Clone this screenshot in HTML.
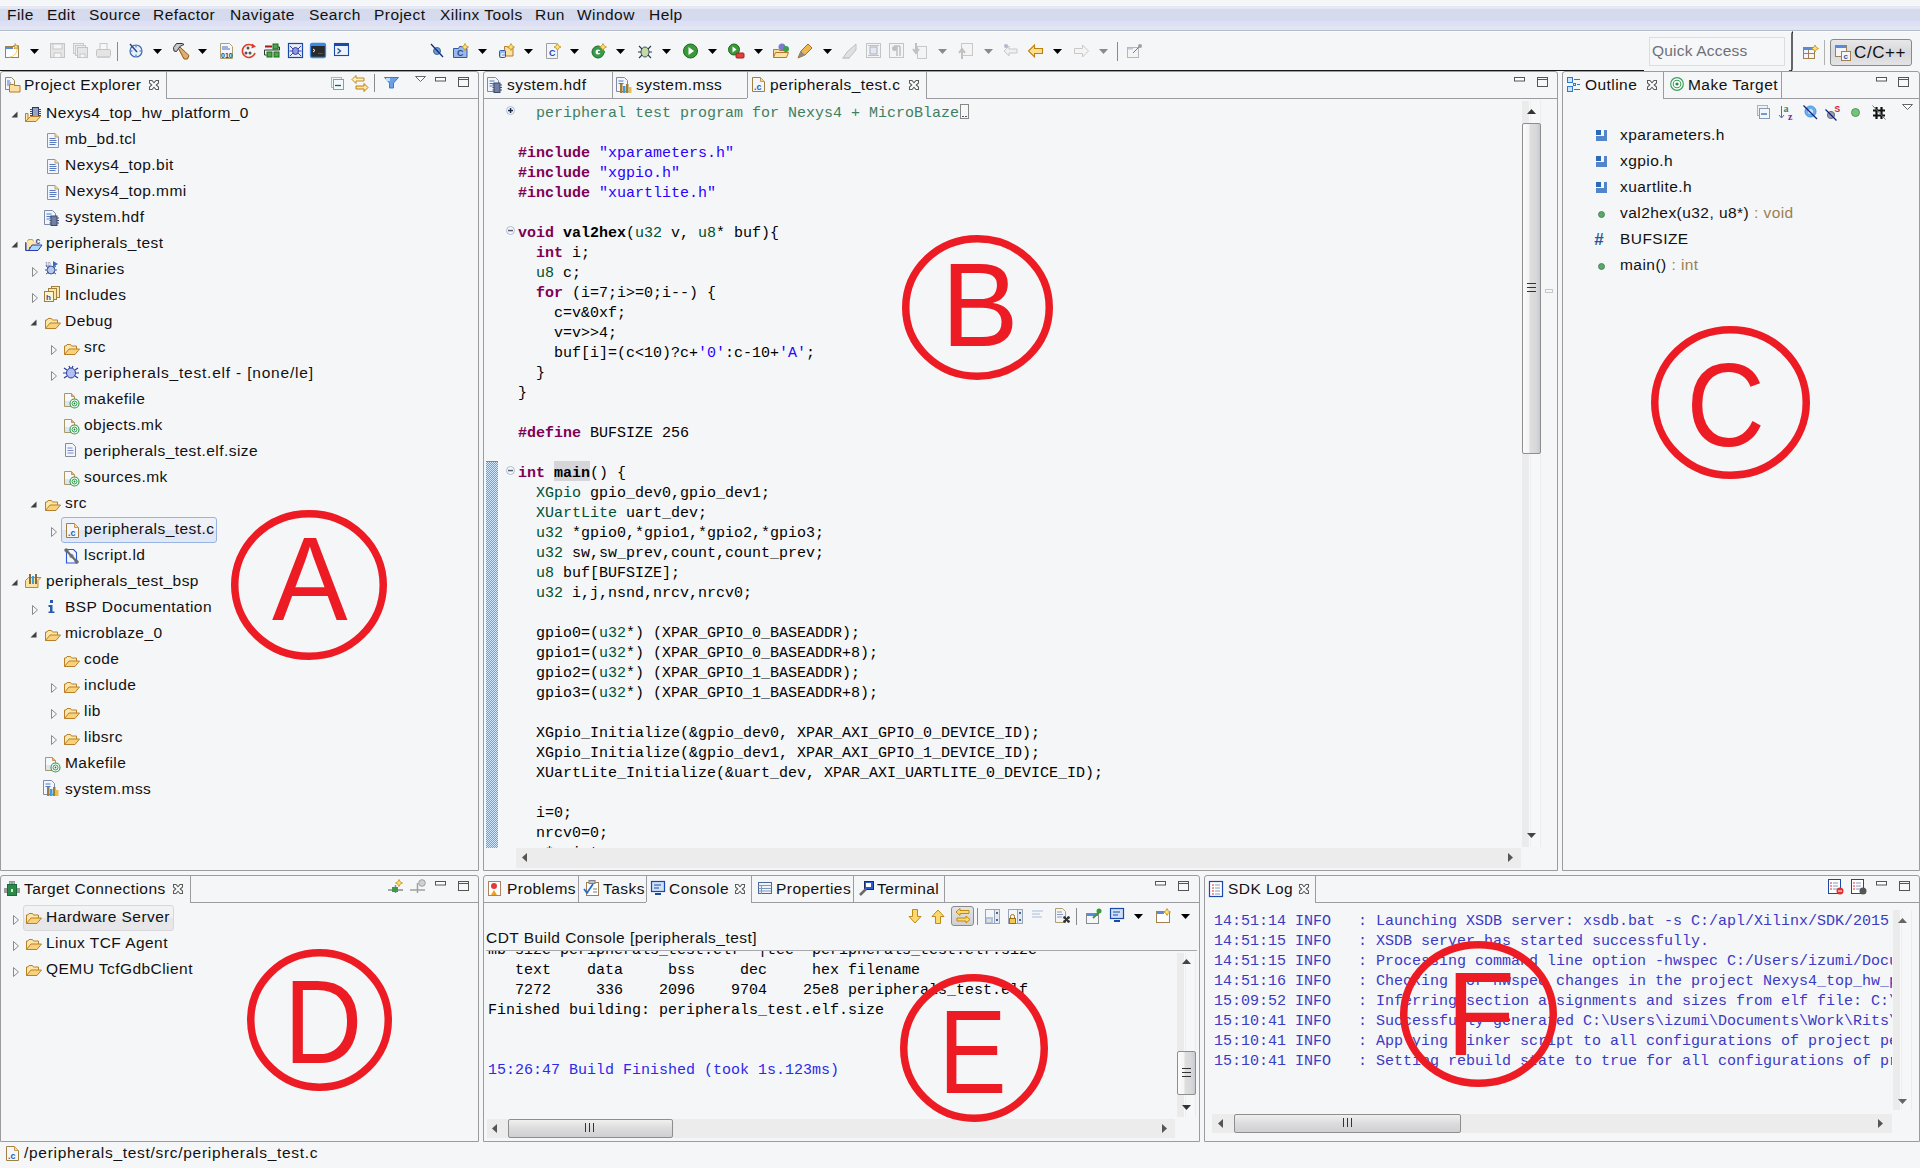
<!DOCTYPE html><html><head><meta charset="utf-8"><style>
*{box-sizing:border-box}
html,body{margin:0;padding:0;width:1920px;height:1168px;overflow:hidden;background:#f5f6f8;position:relative}
.ui{position:absolute;font-family:"Liberation Sans",sans-serif;font-size:15.5px;letter-spacing:0.45px;line-height:20px;white-space:pre;color:#111}
.mono{position:absolute;font-family:"Liberation Mono",monospace;font-size:15px;line-height:20px;white-space:pre;color:#000}
.ic{position:absolute;overflow:visible}
.box{position:absolute}
.k{color:#7f0055;font-weight:bold}
.s{color:#2a00ff}
.c{color:#3f7f5f}
.t{color:#005032}
.b{font-weight:bold}
</style></head><body>
<div class="box" style="left:0;top:5px;width:1920px;height:1px;background:#f8f9fb"></div><div class="box" style="left:0;top:6px;width:1920px;height:1px;background:#e3e6f2"></div><div class="box" style="left:0;top:7px;width:1920px;height:1px;background:#ebebef"></div><div class="box" style="left:0;top:8px;width:1920px;height:1px;background:#e2e7f4"></div><div class="box" style="left:0;top:9px;width:1920px;height:11px;background:#d5daec"></div><div class="box" style="left:0;top:20px;width:1920px;height:1px;background:#d0ddf4"></div><div class="box" style="left:0;top:21px;width:1920px;height:5px;background:#dfdef2"></div><div class="box" style="left:0;top:26px;width:1920px;height:4px;background:#e1e6f4"></div><div class="box" style="left:0;top:30px;width:1920px;height:1px;background:#b4bccc"></div><div class="box" style="left:0;top:31px;width:1920px;height:1px;background:#fbfbfc"></div><div class="ui" style="left:7px;top:5px;">File</div><div class="ui" style="left:47px;top:5px;">Edit</div><div class="ui" style="left:89px;top:5px;">Source</div><div class="ui" style="left:153px;top:5px;">Refactor</div><div class="ui" style="left:230px;top:5px;">Navigate</div><div class="ui" style="left:309px;top:5px;">Search</div><div class="ui" style="left:374px;top:5px;">Project</div><div class="ui" style="left:440px;top:5px;">Xilinx Tools</div><div class="ui" style="left:535px;top:5px;">Run</div><div class="ui" style="left:577px;top:5px;">Window</div><div class="ui" style="left:649px;top:5px;">Help</div><div class="box" style="left:0;top:70px;width:1644px;height:1px;background:#151515"></div><svg class="ic" style="left:5px;top:43px" width="16" height="16" viewBox="0 0 16 16"><rect x="0.5" y="3.5" width="13" height="11" fill="#fff" stroke="#a08050"/><rect x="1" y="4" width="7" height="2" fill="#5a8ae0"/><path d="M10 0.5l1.5 2 2 0-1.5 1.5 1 2-2-1-2 1 1-2-1.5-1.5 2 0z" fill="#ffe070" stroke="#c09020" stroke-width="0.8"/><path d="M4 14c4 0 8-3 8-8" stroke="#f0d060" fill="none"/></svg><svg class="ic" style="left:30px;top:49px" width="9" height="5" viewBox="0 0 9 5"><path d="M0 0h9l-4.5 5z" fill="#000"/></svg><svg class="ic" style="left:50px;top:43px" width="16" height="16" viewBox="0 0 16 16"><rect x="0.5" y="0.5" width="14" height="14" fill="#e6e6e6" stroke="#c4c4c4"/><rect x="3" y="1" width="9" height="5" fill="#f6f6f6" stroke="#c8c8c8"/><rect x="4" y="10" width="7" height="4.5" fill="#f6f6f6" stroke="#c8c8c8"/></svg><svg class="ic" style="left:73px;top:43px" width="16" height="16" viewBox="0 0 16 16"><rect x="0.5" y="0.5" width="10" height="10" fill="#eee" stroke="#c8c8c8"/><rect x="2.5" y="2.5" width="10" height="10" fill="#eee" stroke="#c8c8c8"/><rect x="4.5" y="4.5" width="10" height="10" fill="#e6e6e6" stroke="#c4c4c4"/><rect x="7" y="11" width="5" height="3.5" fill="#f6f6f6" stroke="#c8c8c8"/></svg><svg class="ic" style="left:96px;top:43px" width="16" height="16" viewBox="0 0 16 16"><rect x="4" y="0.5" width="7" height="6" fill="#f7f7f7" stroke="#c8c8c8"/><rect x="0.5" y="6.5" width="14" height="7" rx="1" fill="#e4e4e4" stroke="#c4c4c4"/><rect x="1" y="13" width="13" height="2" fill="#d0d0d0"/></svg><div class="box" style="left:117px;top:42px;width:1px;height:19px;background:#8a8a8a"></div><svg class="ic" style="left:129px;top:43px" width="16" height="16" viewBox="0 0 16 16"><circle cx="7" cy="8" r="6" fill="#e8f0fa" stroke="#3a6ab0" stroke-width="1.2"/><path d="M7 2.5v2M7 11.5v2M1.5 8h2M10.5 8h2" stroke="#3a6ab0"/><path d="M1 1l7 8" stroke="#2a4a90" stroke-width="1.5"/></svg><svg class="ic" style="left:153px;top:49px" width="9" height="5" viewBox="0 0 9 5"><path d="M0 0h9l-4.5 5z" fill="#000"/></svg><svg class="ic" style="left:173px;top:43px" width="16" height="16" viewBox="0 0 16 16"><path d="M5.5 5.5L7 4l9 8.5-1.5 3.5h-3.5z" fill="#d8b070" stroke="#9a5010"/><path d="M0.5 4.5L3.5 0.5H9.5L11 1.5L7.5 3L5.5 5.5L3.5 8.5L1 8Z" fill="#c4c6cc" stroke="#333"/></svg><svg class="ic" style="left:198px;top:49px" width="9" height="5" viewBox="0 0 9 5"><path d="M0 0h9l-4.5 5z" fill="#000"/></svg><svg class="ic" style="left:220px;top:43px" width="16" height="16" viewBox="0 0 16 16"><path d="M0.5 0.5h9l3 3v12h-12z" fill="#f7f7fb" stroke="#b0a070"/><path d="M2 4h6M2 6h8" stroke="#4a6ac0"/><text x="1" y="14.5" font-size="7" font-weight="bold" fill="#2a3a7a" font-family="Liberation Sans">010</text></svg><svg class="ic" style="left:241px;top:43px" width="16" height="16" viewBox="0 0 16 16"><path d="M13 4a6.5 6.5 0 1 0 1 6" fill="none" stroke="#e03a2a" stroke-width="1.6"/><path d="M11 0.5l4 3-4.5 2z" fill="#e03a2a"/><circle cx="5" cy="10" r="1.5" fill="#555"/><circle cx="9" cy="10" r="1.5" fill="#555"/><circle cx="7" cy="5" r="1.5" fill="#555"/></svg><svg class="ic" style="left:264px;top:43px" width="16" height="16" viewBox="0 0 16 16"><rect x="9" y="1" width="5" height="5" fill="#4aa84a" stroke="#1a6a1a"/><rect x="3" y="9" width="5" height="5" fill="#4aa84a" stroke="#1a6a1a"/><rect x="10" y="9" width="5" height="5" fill="#4aa84a" stroke="#1a6a1a"/><path d="M1 3.5h7" stroke="#a01a1a" stroke-width="2"/><path d="M14 4h1.5v3h-15v5h2" fill="none" stroke="#333"/></svg><svg class="ic" style="left:288px;top:43px" width="16" height="16" viewBox="0 0 16 16"><rect x="0.5" y="0.5" width="14" height="14" fill="#e8eefa" stroke="#1a4aa8" stroke-width="1.2"/><ellipse cx="7.5" cy="8" rx="3" ry="3.5" fill="#8a9ae0" stroke="#3a3aa0"/><path d="M2 3l3 3M13 3l-3 3M2 13l3-3M13 13l-3-3M1.5 8h2.5M11 8h2.5" stroke="#3a3aa0"/></svg><svg class="ic" style="left:310px;top:43px" width="16" height="16" viewBox="0 0 16 16"><rect x="0.5" y="0.5" width="15" height="14" rx="1.5" fill="#2a2a2a" stroke="#3a8ae8" stroke-width="1.3"/><rect x="1" y="1" width="14" height="2" fill="#3a8ae8"/><path d="M3 6l2 1.5-2 1.5" stroke="#fff" fill="none"/><rect x="8" y="10" width="5" height="1" fill="#8a3a3a"/></svg><svg class="ic" style="left:334px;top:43px" width="16" height="16" viewBox="0 0 16 16"><rect x="0.5" y="0.5" width="14" height="12" fill="#eef2fa" stroke="#1a4aa8" stroke-width="1.1"/><rect x="1" y="1" width="13" height="2" fill="#1a4aa8"/><path d="M3.5 5.5l3 2.5-3 2.5" stroke="#1a4aa8" fill="none" stroke-width="1.3"/></svg><svg class="ic" style="left:430px;top:43px" width="16" height="16" viewBox="0 0 16 16"><circle cx="7" cy="8" r="3.5" fill="#6a9ad0" stroke="#3a6aa0"/><path d="M1 1l12 13" stroke="#1a2a7a" stroke-width="1.3"/></svg><svg class="ic" style="left:453px;top:43px" width="16" height="16" viewBox="0 0 16 16"><path d="M0.5 5.5h5l1-2h5l1 2h1.5v9h-13.5z" fill="#9ab8e8" stroke="#2a5ab0"/><text x="4" y="13" font-size="9" font-weight="bold" fill="#2a4a8a" font-family="Liberation Sans">C</text><path d="M12 0.5l1.2 2.3 2.3 1.2-2.3 1.2-1.2 2.3-1.2-2.3-2.3-1.2 2.3-1.2z" fill="#ffe070" stroke="#c09020" stroke-width="0.8"/></svg><svg class="ic" style="left:478px;top:49px" width="9" height="5" viewBox="0 0 9 5"><path d="M0 0h9l-4.5 5z" fill="#000"/></svg><svg class="ic" style="left:499px;top:43px" width="16" height="16" viewBox="0 0 16 16"><path d="M5.5 3.5h3l1 1.5h4.5v8h-8z" fill="#fbe0a0" stroke="#b8782a"/><rect x="0.5" y="7.5" width="6" height="7" rx="1" fill="#9ab8e8" stroke="#2a5ab0"/><text x="1.5" y="13.5" font-size="6" font-weight="bold" fill="#fff" font-family="Liberation Sans">C</text><path d="M12 0.5l1.2 2.3 2.3 1.2-2.3 1.2-1.2 2.3-1.2-2.3-2.3-1.2 2.3-1.2z" fill="#ffe070" stroke="#c09020" stroke-width="0.8"/></svg><svg class="ic" style="left:524px;top:49px" width="9" height="5" viewBox="0 0 9 5"><path d="M0 0h9l-4.5 5z" fill="#000"/></svg><svg class="ic" style="left:546px;top:43px" width="16" height="16" viewBox="0 0 16 16"><path d="M0.5 0.5h10l1 2v13h-11z" fill="#f2f5fb" stroke="#a0a0a0"/><text x="3" y="13" font-size="9" font-weight="bold" fill="#2a4ab0" font-family="Liberation Sans">C</text><path d="M11.5 0.5l1.2 2.3 2.3 1.2-2.3 1.2-1.2 2.3-1.2-2.3-2.3-1.2 2.3-1.2z" fill="#ffe070" stroke="#c09020" stroke-width="0.8"/></svg><svg class="ic" style="left:570px;top:49px" width="9" height="5" viewBox="0 0 9 5"><path d="M0 0h9l-4.5 5z" fill="#000"/></svg><svg class="ic" style="left:591px;top:43px" width="16" height="16" viewBox="0 0 16 16"><circle cx="7" cy="9" r="6" fill="#3a9a4a" stroke="#1a6a2a"/><circle cx="7" cy="9" r="2.5" fill="#f5f6f8"/><rect x="7" y="8" width="7" height="2" fill="#3a9a4a"/><path d="M12 0.5l1.2 2.3 2.3 1.2-2.3 1.2-1.2 2.3-1.2-2.3-2.3-1.2 2.3-1.2z" fill="#ffe070" stroke="#c09020" stroke-width="0.8"/></svg><svg class="ic" style="left:616px;top:49px" width="9" height="5" viewBox="0 0 9 5"><path d="M0 0h9l-4.5 5z" fill="#000"/></svg><svg class="ic" style="left:637px;top:43px" width="16" height="16" viewBox="0 0 16 16"><ellipse cx="8" cy="9" rx="4" ry="5" fill="#c8d8a0" stroke="#2a5a6a"/><path d="M2 3l3 3M14 3l-3 3M1 9h3M12 9h3M2 15l3-3M14 15l-3-3" stroke="#2a3a4a" stroke-width="1.1"/></svg><svg class="ic" style="left:662px;top:49px" width="9" height="5" viewBox="0 0 9 5"><path d="M0 0h9l-4.5 5z" fill="#000"/></svg><svg class="ic" style="left:683px;top:43px" width="16" height="16" viewBox="0 0 16 16"><circle cx="7.5" cy="8" r="7" fill="#3a9a3a" stroke="#1a6a1a"/><path d="M5.5 4l5.5 4-5.5 4z" fill="#fff"/></svg><svg class="ic" style="left:708px;top:49px" width="9" height="5" viewBox="0 0 9 5"><path d="M0 0h9l-4.5 5z" fill="#000"/></svg><svg class="ic" style="left:728px;top:43px" width="16" height="16" viewBox="0 0 16 16"><circle cx="6" cy="6.5" r="5.5" fill="#3a9a3a" stroke="#1a6a1a"/><path d="M4.5 3.5l4 3-4 3z" fill="#fff"/><rect x="8" y="10" width="8" height="5" rx="1" fill="#e04040" stroke="#a02020"/></svg><svg class="ic" style="left:754px;top:49px" width="9" height="5" viewBox="0 0 9 5"><path d="M0 0h9l-4.5 5z" fill="#000"/></svg><svg class="ic" style="left:773px;top:43px" width="16" height="16" viewBox="0 0 16 16"><path d="M0.5 6.5h5l1 1h6v7h-12z" fill="#fbe0a0" stroke="#b8782a"/><path d="M0.5 14.5l2-5h13l-2 5z" fill="#fbe6a6" stroke="#b8782a"/><circle cx="9" cy="4" r="3.5" fill="#7a7ad0"/><circle cx="13" cy="6" r="3" fill="#3aa04a"/></svg><svg class="ic" style="left:797px;top:43px" width="16" height="16" viewBox="0 0 16 16"><path d="M1 15l3-7 7-7 4 4-7 7z" fill="#f0b850" stroke="#a07020"/><path d="M1 15l3-7 4 4z" fill="#8a8a8a"/></svg><svg class="ic" style="left:823px;top:49px" width="9" height="5" viewBox="0 0 9 5"><path d="M0 0h9l-4.5 5z" fill="#000"/></svg><svg class="ic" style="left:842px;top:43px" width="16" height="16" viewBox="0 0 16 16"><path d="M1 15l4-6 9-8v6l-7 8z" fill="#e0e0e0" stroke="#c0c0c0"/><path d="M0 15h8" stroke="#c8c8c8"/></svg><svg class="ic" style="left:866px;top:43px" width="16" height="16" viewBox="0 0 16 16"><rect x="0.5" y="0.5" width="14" height="14" fill="#f4f4f4" stroke="#c4c4c4"/><rect x="4" y="4" width="7" height="7" fill="#e6e8f0" stroke="#a8b0c8"/><path d="M2 2.5h11M2 12.5h11" stroke="#c0c0c0"/></svg><svg class="ic" style="left:889px;top:43px" width="16" height="16" viewBox="0 0 16 16"><rect x="0.5" y="0.5" width="14" height="14" fill="#f4f4f4" stroke="#c4c4c4"/><path d="M5 3h6M8 3v10M11 3v10" stroke="#c0c0c0" stroke-width="1.5"/><circle cx="5.5" cy="5.5" r="2.5" fill="#c0c0c0"/></svg><svg class="ic" style="left:912px;top:43px" width="16" height="16" viewBox="0 0 16 16"><rect x="5.5" y="3.5" width="9" height="12" fill="#f4f4f4" stroke="#c8c8c8"/><path d="M4 0v8M1 6l3 4 3-4" stroke="#c0c0c0" stroke-width="2" fill="none"/></svg><svg class="ic" style="left:938px;top:49px" width="9" height="5" viewBox="0 0 9 5"><path d="M0 0h9l-4.5 5z" fill="#8a8a8a"/></svg><svg class="ic" style="left:958px;top:43px" width="16" height="16" viewBox="0 0 16 16"><rect x="3.5" y="0.5" width="11" height="12" fill="#f4f4f4" stroke="#c8c8c8"/><path d="M4 16v-8M1 10l3-4 3 4" stroke="#c0c0c0" stroke-width="2" fill="none"/></svg><svg class="ic" style="left:984px;top:49px" width="9" height="5" viewBox="0 0 9 5"><path d="M0 0h9l-4.5 5z" fill="#8a8a8a"/></svg><svg class="ic" style="left:1003px;top:43px" width="16" height="16" viewBox="0 0 16 16"><path d="M1 8l5-5v3h8v4h-8v3z" fill="#f0f0f0" stroke="#c8c8c8"/><circle cx="3" cy="3" r="2" fill="#b0b8c8"/></svg><svg class="ic" style="left:1028px;top:43px" width="16" height="16" viewBox="0 0 16 16"><path d="M0.5 8l6-6v3.5h8v5h-8v3.5z" fill="#fbe090" stroke="#c08010" stroke-width="1.1"/></svg><svg class="ic" style="left:1053px;top:49px" width="9" height="5" viewBox="0 0 9 5"><path d="M0 0h9l-4.5 5z" fill="#000"/></svg><svg class="ic" style="left:1074px;top:43px" width="16" height="16" viewBox="0 0 16 16"><path d="M14.5 8l-6-6v3.5h-8v5h8v3.5z" fill="#f4f4f4" stroke="#c8c8c8"/></svg><svg class="ic" style="left:1099px;top:49px" width="9" height="5" viewBox="0 0 9 5"><path d="M0 0h9l-4.5 5z" fill="#8a8a8a"/></svg><div class="box" style="left:1117px;top:42px;width:1px;height:19px;background:#8a8a8a"></div><svg class="ic" style="left:1127px;top:43px" width="16" height="16" viewBox="0 0 16 16"><rect x="0.5" y="4.5" width="11" height="10" fill="#f4f4f4" stroke="#b8b8b8"/><rect x="1" y="5" width="5" height="1.5" fill="#c0c8d8"/><path d="M6 10l6-6" stroke="#5a8a5a"/><circle cx="13" cy="3" r="2" fill="#a0a0a0"/></svg><div class="box" style="left:1649px;top:37px;width:136px;height:29px;border:1px solid #dcdde0;background:#f6f7f9"></div><div class="ui" style="left:1652px;top:41px;color:#6e7078;letter-spacing:0.2px">Quick Access</div><svg class="ic" style="left:1785px;top:31px" width="14" height="42" viewBox="0 0 14 42"><path d="M8 1c-1 0-1 1-1 3v34c0 2 -1 2 -3 2" fill="none" stroke="#1a1a1a" stroke-width="1.3"/></svg><svg class="ic" style="left:1803px;top:45px" width="16" height="15" viewBox="0 0 16 15"><rect x="0.5" y="2.5" width="11" height="11" fill="#f4f6fa" stroke="#a08050"/><rect x="1" y="3" width="10" height="2" fill="#5a8ae0"/><path d="M0.5 8.5h11M5.5 5v9" stroke="#a08050"/><path d="M12 0l1.2 2.3 2.3 1.2-2.3 1.2-1.2 2.3-1.2-2.3-2.3-1.2 2.3-1.2z" fill="#ffe070" stroke="#c09020" stroke-width="0.8"/></svg><div class="box" style="left:1824px;top:40px;width:1px;height:25px;background:#b0b0b0"></div><div class="box" style="left:1830px;top:39px;width:82px;height:27px;border:1px solid #8a8a8a;border-radius:3px;background:linear-gradient(#e8e8ea,#d8d8da 50%,#e4e4e6)"></div><svg class="ic" style="left:1835px;top:45px" width="16" height="16" viewBox="0 0 16 16"><rect x="0.5" y="0.5" width="11" height="11" fill="#f4f6fa" stroke="#a08050"/><rect x="1" y="1" width="10" height="2" fill="#5a8ae0"/><rect x="6.5" y="6.5" width="9" height="9" fill="#f4f6fa" stroke="#a08050"/><text x="8.5" y="14" font-size="8" font-weight="bold" fill="#2a5ab0" font-family="Liberation Sans">c</text></svg><div class="ui" style="left:1854px;top:43px;font-size:17px;letter-spacing:0.6px">C/C++</div><div class="box" style="left:0px;top:71px;width:479px;height:800px;border:1px solid #9c9ca0;border-top-left-radius:3px;border-top-right-radius:3px"></div><div class="box" style="left:166px;top:72px;width:1px;height:26px;background:#9c9ca0"></div><div class="box" style="left:166px;top:98px;width:312px;height:1px;background:#9c9ca0"></div><svg class="ic" style="left:5px;top:77px" width="16" height="16" viewBox="0 0 16 16"><path d="M0.5 0.5h6l3 3v9h-9z" fill="#f2f5fb" stroke="#9a8a50"/><path d="M2 4h3M2 6h4M2 8h2" stroke="#4a7acb"/><path d="M4.5 7.5h4l1 1h5.5v6.5h-10.5z" fill="#fbe0a0" stroke="#b8782a"/></svg><div class="ui" style="left:24px;top:75px;">Project Explorer</div><svg class="ic" style="left:149px;top:80px" width="10" height="10" viewBox="0 0 10 10"><path d="M0.5 0.5H3L5 2.8L7 0.5H9.5V3L7.2 5L9.5 7V9.5H7L5 7.2L3 9.5H0.5V7L2.8 5L0.5 3Z" fill="#fcfcfc" stroke="#5a5a5a" stroke-width="1.05"/></svg><svg class="ic" style="left:331px;top:77px" width="14" height="14" viewBox="0 0 14 14"><rect x="0.5" y="0.5" width="10" height="10" fill="#eef6f8" stroke="#a8b8c8"/><rect x="2.5" y="2.5" width="10" height="10" fill="#f2fafc" stroke="#8a9ab0"/><path d="M4 8.5h6" stroke="#1a5a7a" stroke-width="1.3"/></svg><svg class="ic" style="left:351px;top:75px" width="18" height="17" viewBox="0 0 18 17"><path d="M1 4.5l4-4v2.5h8v3h-8v2.5z" fill="#fdf0c0" stroke="#c08a20"/><path d="M17 12.5l-4-4v2.5h-8v3h8v2.5z" fill="#fce8a0" stroke="#c07a10"/></svg><div class="box" style="left:374px;top:74px;width:1px;height:18px;background:#8a8a8a"></div><svg class="ic" style="left:384px;top:77px" width="15" height="12" viewBox="0 0 15 12"><path d="M0.5 0.5h14l-5 5.5v5h-4v-5z" fill="#6aa0e8" stroke="#3a7ad0"/><rect x="2" y="1" width="4" height="3" fill="#c8dcf8"/></svg><svg class="ic" style="left:415px;top:76px" width="11" height="6" viewBox="0 0 11 6"><path d="M0.5 0.5h10l-5 5z" fill="#fff" stroke="#666"/></svg><svg class="ic" style="left:435px;top:77px" width="11" height="5" viewBox="0 0 11 5"><rect x="0.5" y="0.5" width="10" height="3.5" fill="#fff" stroke="#555"/></svg><svg class="ic" style="left:458px;top:77px" width="11" height="10" viewBox="0 0 11 10"><rect x="0.5" y="0.5" width="10" height="9" fill="#f8f8f8" stroke="#555"/><path d="M0.5 2.5h10" stroke="#555"/></svg><div class="box" style="left:61px;top:517px;width:156px;height:26px;background:linear-gradient(#eef1f8 0,#eef1f8 50%,#dfe5f4 50%,#e2e8f5 100%);border:1px solid #98b4e4;border-radius:3px"></div><svg class="ic" style="left:11px;top:111px" width="7" height="7" viewBox="0 0 7 7"><path d="M6.5 0.5v6h-6z" fill="#404040"/></svg><svg class="ic" style="left:25px;top:107px" width="16" height="15" viewBox="0 0 16 15"><path d="M0.5 14.5v-8h2.5v8z" fill="#fce9b0" stroke="#b8802a"/><rect x="7.5" y="0.5" width="6" height="9" fill="#98a4bc" stroke="#2a3a6a"/><path d="M5 2.5h2.5M5 4.5h2.5M5 6.5h2.5M5 8.5h2.5M13.5 2.5h2.5M13.5 4.5h2.5M13.5 6.5h2.5M13.5 8.5h2.5" stroke="#3a4a7a"/><path d="M0.5 14.5l5-5h10l-4.5 5z" fill="#f8d88a" stroke="#b8802a"/></svg><div class="ui" style="left:46px;top:103px;">Nexys4_top_hw_platform_0</div><svg class="ic" style="left:47px;top:133px" width="12" height="15" viewBox="0 0 12 15"><path d="M0.5 0.5h7.5l3.5 3.5v10.5h-11z" fill="#f2f5fb" stroke="#8a94b0"/><path d="M8 0.5v3.5h3.5" fill="#f3d9a0" stroke="#c8a060"/><path d="M2.5 5.5h6M2.5 7.5h7M2.5 9.5h7M2.5 11.5h6" stroke="#5a7ac0" stroke-width="1"/></svg><div class="ui" style="left:65px;top:129px;">mb_bd.tcl</div><svg class="ic" style="left:47px;top:159px" width="12" height="15" viewBox="0 0 12 15"><path d="M0.5 0.5h7.5l3.5 3.5v10.5h-11z" fill="#f2f5fb" stroke="#8a94b0"/><path d="M8 0.5v3.5h3.5" fill="#f3d9a0" stroke="#c8a060"/><path d="M2.5 5.5h6M2.5 7.5h7M2.5 9.5h7M2.5 11.5h6" stroke="#5a7ac0" stroke-width="1"/></svg><div class="ui" style="left:65px;top:155px;">Nexys4_top.bit</div><svg class="ic" style="left:47px;top:185px" width="12" height="15" viewBox="0 0 12 15"><path d="M0.5 0.5h7.5l3.5 3.5v10.5h-11z" fill="#f2f5fb" stroke="#8a94b0"/><path d="M8 0.5v3.5h3.5" fill="#f3d9a0" stroke="#c8a060"/><path d="M2.5 5.5h6M2.5 7.5h7M2.5 9.5h7M2.5 11.5h6" stroke="#5a7ac0" stroke-width="1"/></svg><div class="ui" style="left:65px;top:181px;">Nexys4_top.mmi</div><svg class="ic" style="left:44px;top:210px" width="17" height="16" viewBox="0 0 17 16"><path d="M0.5 0.5h8l3 3v11h-11z" fill="#f2f5fb" stroke="#7d8aa8"/><path d="M2.5 4h5M2.5 6.5h5M2.5 9h3" stroke="#4a7acb"/><rect x="7" y="6" width="6" height="9.5" fill="#6f7fa6" stroke="#3d4a6a"/><path d="M5.5 8h1.5M5.5 10.5h1.5M5.5 13h1.5M13 8h2M13 10.5h2M13 13h2" stroke="#3d4a6a"/></svg><div class="ui" style="left:65px;top:207px;">system.hdf</div><svg class="ic" style="left:11px;top:241px" width="7" height="7" viewBox="0 0 7 7"><path d="M6.5 0.5v6h-6z" fill="#404040"/></svg><svg class="ic" style="left:25px;top:237px" width="17" height="14" viewBox="0 0 17 14"><path d="M0.5 5.5v8h4v-8z" fill="#fbe3a0" stroke="#6a6aa8"/><path d="M2.5 4.5l1-2h4l1 2" fill="#fbe3a0" stroke="#b8a060"/><rect x="1" y="5" width="11" height="5" fill="#fbe6a8"/><path d="M3.5 13.5l3.5-5.5h10l-4 5.5z" fill="#a8d8fa" stroke="#2a3ab0"/><path d="M1 5.5v8h3" fill="none" stroke="#2a3ab0"/><text x="10.5" y="6.5" font-family="Liberation Sans" font-weight="bold" font-size="8.5" fill="#1a5a9a">c</text></svg><div class="ui" style="left:46px;top:233px;">peripherals_test</div><svg class="ic" style="left:32px;top:267px" width="6" height="10" viewBox="0 0 6 10"><path d="M0.5 0.5l5 4.5-5 4.5z" fill="none" stroke="#8a8a8a"/></svg><svg class="ic" style="left:44px;top:260px" width="16" height="16" viewBox="0 0 16 16"><circle cx="7" cy="10" r="4" fill="#b9c8e8" stroke="#3a5a9a"/><path d="M2 6l3 2M12 6l-3 2M1 10h2M11 10h2M2 14l3-2M12 14l-3-2" stroke="#3a5a9a"/><path d="M9 1v6l5-3z" fill="#3a6ac0"/><text x="1" y="6" font-size="5" fill="#666" font-family="Liberation Sans">10</text></svg><div class="ui" style="left:65px;top:259px;">Binaries</div><svg class="ic" style="left:32px;top:293px" width="6" height="10" viewBox="0 0 6 10"><path d="M0.5 0.5l5 4.5-5 4.5z" fill="none" stroke="#8a8a8a"/></svg><svg class="ic" style="left:44px;top:286px" width="16" height="16" viewBox="0 0 16 16"><rect x="7.5" y="0.5" width="8" height="11" fill="#fbe6a6" stroke="#a08040"/><rect x="4.5" y="2.5" width="8" height="11" fill="#fbe6a6" stroke="#a08040"/><rect x="0.5" y="5.5" width="9" height="10" fill="#fff3d0" stroke="#a08040"/><text x="2" y="14" font-size="8" font-weight="bold" fill="#2b4ea8" font-family="Liberation Sans">h</text></svg><div class="ui" style="left:65px;top:285px;">Includes</div><svg class="ic" style="left:30px;top:319px" width="7" height="7" viewBox="0 0 7 7"><path d="M6.5 0.5v6h-6z" fill="#404040"/></svg><svg class="ic" style="left:45px;top:318px" width="16" height="12" viewBox="0 0 16 12"><path d="M0.5 10.5v-8.5h1.5l1-1.5h3.5l1 1.5h5v3.5" fill="#fbe6a8" stroke="#b8802a"/><path d="M0.5 10.5l4.5-5.5h10.5l-4.5 5.5z" fill="#f8d27a" stroke="#b8802a"/></svg><div class="ui" style="left:65px;top:311px;">Debug</div><svg class="ic" style="left:51px;top:345px" width="6" height="10" viewBox="0 0 6 10"><path d="M0.5 0.5l5 4.5-5 4.5z" fill="none" stroke="#8a8a8a"/></svg><svg class="ic" style="left:64px;top:344px" width="16" height="12" viewBox="0 0 16 12"><path d="M0.5 10.5v-8.5h1.5l1-1.5h3.5l1 1.5h5v3.5" fill="#fbe6a8" stroke="#b8802a"/><path d="M0.5 10.5l4.5-5.5h10.5l-4.5 5.5z" fill="#f8d27a" stroke="#b8802a"/></svg><div class="ui" style="left:84px;top:337px;">src</div><svg class="ic" style="left:51px;top:371px" width="6" height="10" viewBox="0 0 6 10"><path d="M0.5 0.5l5 4.5-5 4.5z" fill="none" stroke="#8a8a8a"/></svg><svg class="ic" style="left:63px;top:364px" width="16" height="16" viewBox="0 0 16 16"><ellipse cx="8" cy="9" rx="4.5" ry="5" fill="#b0c0f0" stroke="#2a3a9a"/><path d="M1 4l3 2M15 4l-3 2M0 9h3M13 9h3M1 14l3-2M15 14l-3-2M6 2l1 2M10 2l-1 2" stroke="#2a3a9a" stroke-width="1.2"/></svg><div class="ui" style="left:84px;top:363px;letter-spacing:0.8px">peripherals_test.elf - [none/le]</div><svg class="ic" style="left:64px;top:393px" width="16" height="16" viewBox="0 0 16 16"><path d="M0.5 0.5h7l3 3v10h-10z" fill="#f6f8fc" stroke="#a89868"/><rect x="1" y="8" width="5" height="5" fill="#dde4f4"/><path d="M7.5 0.5v3h3" fill="#f0b070" stroke="#d09050"/><circle cx="10.5" cy="10.5" r="4.5" fill="#fff" stroke="#2a9a4a" stroke-width="1.1"/><circle cx="10.5" cy="10.5" r="2.5" fill="none" stroke="#2a9a4a"/><circle cx="10.5" cy="10.5" r="0.9" fill="#1a7a2a"/></svg><div class="ui" style="left:84px;top:389px;">makefile</div><svg class="ic" style="left:64px;top:419px" width="16" height="16" viewBox="0 0 16 16"><path d="M0.5 0.5h7l3 3v10h-10z" fill="#f6f8fc" stroke="#a89868"/><rect x="1" y="8" width="5" height="5" fill="#dde4f4"/><path d="M7.5 0.5v3h3" fill="#f0b070" stroke="#d09050"/><circle cx="10.5" cy="10.5" r="4.5" fill="#fff" stroke="#2a9a4a" stroke-width="1.1"/><circle cx="10.5" cy="10.5" r="2.5" fill="none" stroke="#2a9a4a"/><circle cx="10.5" cy="10.5" r="0.9" fill="#1a7a2a"/></svg><div class="ui" style="left:84px;top:415px;">objects.mk</div><svg class="ic" style="left:65px;top:443px" width="11" height="14" viewBox="0 0 11 14"><path d="M0.5 0.5h7l3 3v10h-10z" fill="#f2f5fb" stroke="#8a8a9a"/><path d="M2.5 5h5M2.5 7.5h6M2.5 10h6" stroke="#7a8acb"/></svg><div class="ui" style="left:84px;top:441px;">peripherals_test.elf.size</div><svg class="ic" style="left:64px;top:471px" width="16" height="16" viewBox="0 0 16 16"><path d="M0.5 0.5h7l3 3v10h-10z" fill="#f6f8fc" stroke="#a89868"/><rect x="1" y="8" width="5" height="5" fill="#dde4f4"/><path d="M7.5 0.5v3h3" fill="#f0b070" stroke="#d09050"/><circle cx="10.5" cy="10.5" r="4.5" fill="#fff" stroke="#2a9a4a" stroke-width="1.1"/><circle cx="10.5" cy="10.5" r="2.5" fill="none" stroke="#2a9a4a"/><circle cx="10.5" cy="10.5" r="0.9" fill="#1a7a2a"/></svg><div class="ui" style="left:84px;top:467px;">sources.mk</div><svg class="ic" style="left:30px;top:501px" width="7" height="7" viewBox="0 0 7 7"><path d="M6.5 0.5v6h-6z" fill="#404040"/></svg><svg class="ic" style="left:45px;top:500px" width="16" height="12" viewBox="0 0 16 12"><path d="M0.5 10.5v-8.5h1.5l1-1.5h3.5l1 1.5h5v3.5" fill="#fbe6a8" stroke="#b8802a"/><path d="M0.5 10.5l4.5-5.5h10.5l-4.5 5.5z" fill="#f8d27a" stroke="#b8802a"/></svg><div class="ui" style="left:65px;top:493px;">src</div><svg class="ic" style="left:51px;top:527px" width="6" height="10" viewBox="0 0 6 10"><path d="M0.5 0.5l5 4.5-5 4.5z" fill="none" stroke="#8a8a8a"/></svg><svg class="ic" style="left:66px;top:523px" width="13" height="15" viewBox="0 0 13 15"><path d="M0.5 0.5h8l4 4v10h-12z" fill="#f4f6fb" stroke="#a08040"/><path d="M8.5 0.5v4h4" fill="#f3d79b" stroke="#c89a50"/><text x="2" y="12.5" font-family="Liberation Sans" font-weight="bold" font-size="9" fill="#2b5ea8">.c</text></svg><div class="ui" style="left:84px;top:519px;">peripherals_test.c</div><svg class="ic" style="left:64px;top:548px" width="16" height="16" viewBox="0 0 16 16"><path d="M2.5 1.5h7l3 3v10.5h-10z" fill="#f4f6fc" stroke="#2a5ad0" stroke-width="1.1"/><path d="M1 1l13 14" stroke="#6a6a70" stroke-width="2.2"/><circle cx="2.5" cy="2.5" r="1.6" fill="none" stroke="#6a6a70"/><circle cx="7.5" cy="8" r="1.6" fill="none" stroke="#6a6a70"/><circle cx="12.5" cy="13.5" r="1.6" fill="none" stroke="#6a6a70"/></svg><div class="ui" style="left:84px;top:545px;">lscript.ld</div><svg class="ic" style="left:11px;top:579px" width="7" height="7" viewBox="0 0 7 7"><path d="M6.5 0.5v6h-6z" fill="#404040"/></svg><svg class="ic" style="left:25px;top:573px" width="17" height="15" viewBox="0 0 17 15"><path d="M0.5 7.5l3-3h12.5l-3 3v7h-12.5z" fill="#fbe3a0" stroke="#b78a3a"/><rect x="4" y="1" width="2" height="10" fill="#8a6a3a"/><rect x="7" y="3" width="2" height="8" fill="#3aa0e0"/><rect x="10" y="1" width="2" height="10" fill="#8a6a3a"/></svg><div class="ui" style="left:46px;top:571px;">peripherals_test_bsp</div><svg class="ic" style="left:32px;top:605px" width="6" height="10" viewBox="0 0 6 10"><path d="M0.5 0.5l5 4.5-5 4.5z" fill="none" stroke="#8a8a8a"/></svg><svg class="ic" style="left:48px;top:600px" width="8" height="13" viewBox="0 0 8 13"><rect x="2" y="0" width="3" height="3" fill="#2a5ab0"/><path d="M0.5 5h4v6.5h2v1.5h-6v-1.5h1.5v-4.5h-1.5z" fill="#2a5ab0"/></svg><div class="ui" style="left:65px;top:597px;">BSP Documentation</div><svg class="ic" style="left:30px;top:631px" width="7" height="7" viewBox="0 0 7 7"><path d="M6.5 0.5v6h-6z" fill="#404040"/></svg><svg class="ic" style="left:45px;top:630px" width="16" height="12" viewBox="0 0 16 12"><path d="M0.5 10.5v-8.5h1.5l1-1.5h3.5l1 1.5h5v3.5" fill="#fbe6a8" stroke="#b8802a"/><path d="M0.5 10.5l4.5-5.5h10.5l-4.5 5.5z" fill="#f8d27a" stroke="#b8802a"/></svg><div class="ui" style="left:65px;top:623px;">microblaze_0</div><svg class="ic" style="left:64px;top:656px" width="16" height="12" viewBox="0 0 16 12"><path d="M0.5 10.5v-8.5h1.5l1-1.5h3.5l1 1.5h5v3.5" fill="#fbe6a8" stroke="#b8802a"/><path d="M0.5 10.5l4.5-5.5h10.5l-4.5 5.5z" fill="#f8d27a" stroke="#b8802a"/></svg><div class="ui" style="left:84px;top:649px;">code</div><svg class="ic" style="left:51px;top:683px" width="6" height="10" viewBox="0 0 6 10"><path d="M0.5 0.5l5 4.5-5 4.5z" fill="none" stroke="#8a8a8a"/></svg><svg class="ic" style="left:64px;top:682px" width="16" height="12" viewBox="0 0 16 12"><path d="M0.5 10.5v-8.5h1.5l1-1.5h3.5l1 1.5h5v3.5" fill="#fbe6a8" stroke="#b8802a"/><path d="M0.5 10.5l4.5-5.5h10.5l-4.5 5.5z" fill="#f8d27a" stroke="#b8802a"/></svg><div class="ui" style="left:84px;top:675px;">include</div><svg class="ic" style="left:51px;top:709px" width="6" height="10" viewBox="0 0 6 10"><path d="M0.5 0.5l5 4.5-5 4.5z" fill="none" stroke="#8a8a8a"/></svg><svg class="ic" style="left:64px;top:708px" width="16" height="12" viewBox="0 0 16 12"><path d="M0.5 10.5v-8.5h1.5l1-1.5h3.5l1 1.5h5v3.5" fill="#fbe6a8" stroke="#b8802a"/><path d="M0.5 10.5l4.5-5.5h10.5l-4.5 5.5z" fill="#f8d27a" stroke="#b8802a"/></svg><div class="ui" style="left:84px;top:701px;">lib</div><svg class="ic" style="left:51px;top:735px" width="6" height="10" viewBox="0 0 6 10"><path d="M0.5 0.5l5 4.5-5 4.5z" fill="none" stroke="#8a8a8a"/></svg><svg class="ic" style="left:64px;top:734px" width="16" height="12" viewBox="0 0 16 12"><path d="M0.5 10.5v-8.5h1.5l1-1.5h3.5l1 1.5h5v3.5" fill="#fbe6a8" stroke="#b8802a"/><path d="M0.5 10.5l4.5-5.5h10.5l-4.5 5.5z" fill="#f8d27a" stroke="#b8802a"/></svg><div class="ui" style="left:84px;top:727px;">libsrc</div><svg class="ic" style="left:45px;top:757px" width="16" height="16" viewBox="0 0 16 16"><path d="M0.5 0.5h7l3 3v10h-10z" fill="#f6f8fc" stroke="#a89868"/><rect x="1" y="8" width="5" height="5" fill="#dde4f4"/><path d="M7.5 0.5v3h3" fill="#f0b070" stroke="#d09050"/><circle cx="10.5" cy="10.5" r="4.5" fill="#fff" stroke="#2a9a4a" stroke-width="1.1"/><circle cx="10.5" cy="10.5" r="2.5" fill="none" stroke="#2a9a4a"/><circle cx="10.5" cy="10.5" r="0.9" fill="#1a7a2a"/></svg><div class="ui" style="left:65px;top:753px;">Makefile</div><svg class="ic" style="left:43px;top:780px" width="17" height="16" viewBox="0 0 17 16"><path d="M0.5 0.5h8l3 3v11h-11z" fill="#f2f5fb" stroke="#7d8aa8"/><path d="M2.5 4h5M2.5 6.5h5" stroke="#4a7acb"/><rect x="4" y="7" width="2.5" height="9" fill="#a27a3a"/><rect x="7" y="9" width="2.5" height="7" fill="#3aa0e0"/><rect x="10" y="7" width="2.5" height="9" fill="#a27a3a"/><rect x="13" y="10" width="2.5" height="6" fill="#e8c040"/></svg><div class="ui" style="left:65px;top:779px;">system.mss</div><div class="box" style="left:483px;top:71px;width:1075px;height:800px;border:1px solid #9c9ca0;border-top-left-radius:3px;border-top-right-radius:3px"></div><div class="box" style="left:612px;top:72px;width:1px;height:26px;background:#9c9ca0"></div><div class="box" style="left:484px;top:98px;width:263px;height:1px;background:#9c9ca0"></div><div class="box" style="left:747px;top:72px;width:1px;height:26px;background:#9c9ca0"></div><div class="box" style="left:926px;top:72px;width:1px;height:26px;background:#9c9ca0"></div><div class="box" style="left:926px;top:98px;width:631px;height:1px;background:#9c9ca0"></div><svg class="ic" style="left:487px;top:77px" width="17" height="16" viewBox="0 0 17 16"><path d="M0.5 0.5h8l3 3v11h-11z" fill="#f2f5fb" stroke="#7d8aa8"/><path d="M2.5 4h5M2.5 6.5h5M2.5 9h3" stroke="#4a7acb"/><rect x="7" y="6" width="6" height="9.5" fill="#6f7fa6" stroke="#3d4a6a"/><path d="M5.5 8h1.5M5.5 10.5h1.5M5.5 13h1.5M13 8h2M13 10.5h2M13 13h2" stroke="#3d4a6a"/></svg><div class="ui" style="left:507px;top:75px;">system.hdf</div><svg class="ic" style="left:616px;top:77px" width="17" height="16" viewBox="0 0 17 16"><path d="M0.5 0.5h8l3 3v11h-11z" fill="#f2f5fb" stroke="#7d8aa8"/><path d="M2.5 4h5M2.5 6.5h5" stroke="#4a7acb"/><rect x="4" y="7" width="2.5" height="9" fill="#a27a3a"/><rect x="7" y="9" width="2.5" height="7" fill="#3aa0e0"/><rect x="10" y="7" width="2.5" height="9" fill="#a27a3a"/><rect x="13" y="10" width="2.5" height="6" fill="#e8c040"/></svg><div class="ui" style="left:636px;top:75px;">system.mss</div><svg class="ic" style="left:752px;top:77px" width="13" height="15" viewBox="0 0 13 15"><path d="M0.5 0.5h8l4 4v10h-12z" fill="#f4f6fb" stroke="#a08040"/><path d="M8.5 0.5v4h4" fill="#f3d79b" stroke="#c89a50"/><text x="2" y="12.5" font-family="Liberation Sans" font-weight="bold" font-size="9" fill="#2b5ea8">.c</text></svg><div class="ui" style="left:770px;top:75px;">peripherals_test.c</div><svg class="ic" style="left:909px;top:80px" width="10" height="10" viewBox="0 0 10 10"><path d="M0.5 0.5H3L5 2.8L7 0.5H9.5V3L7.2 5L9.5 7V9.5H7L5 7.2L3 9.5H0.5V7L2.8 5L0.5 3Z" fill="#fcfcfc" stroke="#5a5a5a" stroke-width="1.05"/></svg><svg class="ic" style="left:1514px;top:77px" width="11" height="5" viewBox="0 0 11 5"><rect x="0.5" y="0.5" width="10" height="3.5" fill="#fff" stroke="#555"/></svg><svg class="ic" style="left:1537px;top:77px" width="11" height="10" viewBox="0 0 11 10"><rect x="0.5" y="0.5" width="10" height="9" fill="#f8f8f8" stroke="#555"/><path d="M0.5 2.5h10" stroke="#555"/></svg><div class="box" style="left:486px;top:461px;width:12px;height:387px;background:repeating-conic-gradient(#52aaf6 0 25%, #d2e8fc 0 50%) 0 0/2px 2px;border-top:1px solid #3a9af0"></div><div class="box" style="left:554px;top:461px;width:36px;height:20px;background:#d6d6da"></div><svg class="ic" style="left:506px;top:106px" width="9" height="9" viewBox="0 0 9 9"><circle cx="4.5" cy="4.5" r="4" fill="#f4f8fc" stroke="#b0bccf"/><rect x="2" y="3.8" width="5" height="1.5" fill="#1a2a4a"/><rect x="3.8" y="2" width="1.5" height="5" fill="#1a2a4a"/></svg><svg class="ic" style="left:506px;top:226px" width="9" height="9" viewBox="0 0 9 9"><circle cx="4.5" cy="4.5" r="4" fill="#f4f8fc" stroke="#b0bccf"/><rect x="2" y="3.8" width="5" height="1.5" fill="#5a6070"/></svg><svg class="ic" style="left:506px;top:466px" width="9" height="9" viewBox="0 0 9 9"><circle cx="4.5" cy="4.5" r="4" fill="#f4f8fc" stroke="#b0bccf"/><rect x="2" y="3.8" width="5" height="1.5" fill="#5a6070"/></svg><div class="box" style="left:500px;top:100px;width:1020px;height:748px;overflow:hidden"><div class="mono" style="left:36px;top:4px"><span class="c">peripheral test program for Nexys4 + MicroBlaze</span></div><div class="mono" style="left:18px;top:44px"><span class="k">#include</span> <span class="s">"xparameters.h"</span></div><div class="mono" style="left:18px;top:64px"><span class="k">#include</span> <span class="s">"xgpio.h"</span></div><div class="mono" style="left:18px;top:84px"><span class="k">#include</span> <span class="s">"xuartlite.h"</span></div><div class="mono" style="left:18px;top:124px"><span class="k">void</span> <span class="b">val2hex</span>(<span class="t">u32</span> v, <span class="t">u8</span>* buf){</div><div class="mono" style="left:18px;top:144px">  <span class="k">int</span> i;</div><div class="mono" style="left:18px;top:164px">  <span class="t">u8</span> c;</div><div class="mono" style="left:18px;top:184px">  <span class="k">for</span> (i=7;i&gt;=0;i--) {</div><div class="mono" style="left:18px;top:204px">    c=v&amp;0xf;</div><div class="mono" style="left:18px;top:224px">    v=v&gt;&gt;4;</div><div class="mono" style="left:18px;top:244px">    buf[i]=(c&lt;10)?c+<span class="s">'0'</span>:c-10+<span class="s">'A'</span>;</div><div class="mono" style="left:18px;top:264px">  }</div><div class="mono" style="left:18px;top:284px">}</div><div class="mono" style="left:18px;top:324px"><span class="k">#define</span> BUFSIZE 256</div><div class="mono" style="left:18px;top:364px"><span class="k">int</span> <span class="b">main</span>() {</div><div class="mono" style="left:18px;top:384px">  <span class="t">XGpio</span> gpio_dev0,gpio_dev1;</div><div class="mono" style="left:18px;top:404px">  <span class="t">XUartLite</span> uart_dev;</div><div class="mono" style="left:18px;top:424px">  <span class="t">u32</span> *gpio0,*gpio1,*gpio2,*gpio3;</div><div class="mono" style="left:18px;top:444px">  <span class="t">u32</span> sw,sw_prev,count,count_prev;</div><div class="mono" style="left:18px;top:464px">  <span class="t">u8</span> buf[BUFSIZE];</div><div class="mono" style="left:18px;top:484px">  <span class="t">u32</span> i,j,nsnd,nrcv,nrcv0;</div><div class="mono" style="left:18px;top:524px">  gpio0=(<span class="t">u32</span>*) (XPAR_GPIO_0_BASEADDR);</div><div class="mono" style="left:18px;top:544px">  gpio1=(<span class="t">u32</span>*) (XPAR_GPIO_0_BASEADDR+8);</div><div class="mono" style="left:18px;top:564px">  gpio2=(<span class="t">u32</span>*) (XPAR_GPIO_1_BASEADDR);</div><div class="mono" style="left:18px;top:584px">  gpio3=(<span class="t">u32</span>*) (XPAR_GPIO_1_BASEADDR+8);</div><div class="mono" style="left:18px;top:624px">  XGpio_Initialize(&amp;gpio_dev0, XPAR_AXI_GPIO_0_DEVICE_ID);</div><div class="mono" style="left:18px;top:644px">  XGpio_Initialize(&amp;gpio_dev1, XPAR_AXI_GPIO_1_DEVICE_ID);</div><div class="mono" style="left:18px;top:664px">  XUartLite_Initialize(&amp;uart_dev, XPAR_AXI_UARTLITE_0_DEVICE_ID);</div><div class="mono" style="left:18px;top:704px">  i=0;</div><div class="mono" style="left:18px;top:724px">  nrcv0=0;</div><div class="mono" style="left:18px;top:744px">   *  i t</div></div><div class="box" style="left:960px;top:104px;width:9px;height:15px;border:1px solid #888;background:#f8f8f8"></div><div class="box" style="left:962px;top:116px;width:2px;height:1px;background:#555"></div><div class="box" style="left:965px;top:116px;width:2px;height:1px;background:#555"></div><div class="box" style="left:1522px;top:101px;width:19px;height:746px;background:linear-gradient(90deg,#ebebeb 0,#ebebeb 7px,#f9f9f9 7px,#f9f9f9 8px,#eeeeee 8px,#eeeeee 9px,#f6f7f8 9px,#f6f7f8 18px,#ececec 18px)"></div><svg class="ic" style="left:1527px;top:109px" width="9" height="5" viewBox="0 0 9 5"><path d="M4.5 0l4.5 5h-9z" fill="#333"/></svg><svg class="ic" style="left:1527px;top:833px" width="9" height="5" viewBox="0 0 9 5"><path d="M0 0h9l-4.5 5z" fill="#444"/></svg><div class="box" style="left:1522px;top:123px;width:19px;height:331px;border:1px solid #8e8e8e;border-radius:2px;background:linear-gradient(90deg,#fbfbfb 0,#f4f4f4 6px,#dedede 7px,#d8d8da 13px,#d0d2da 15px,#c8c8cc 17px)"></div><div class="box" style="left:1527px;top:283px;width:9px;height:1px;background:#333"></div><div class="box" style="left:1527px;top:287px;width:9px;height:1px;background:#333"></div><div class="box" style="left:1527px;top:291px;width:9px;height:1px;background:#333"></div><div class="box" style="left:1545px;top:289px;width:8px;height:4px;border:1px solid #c8c8c8"></div><div class="box" style="left:516px;top:848px;width:1005px;height:20px;background:#ececec"></div><svg class="ic" style="left:522px;top:853px" width="5" height="9" viewBox="0 0 5 9"><path d="M5 0v9l-5-4.5z" fill="#555"/></svg><svg class="ic" style="left:1508px;top:853px" width="5" height="9" viewBox="0 0 5 9"><path d="M0 0v9l5-4.5z" fill="#555"/></svg><div class="box" style="left:1562px;top:71px;width:358px;height:800px;border:1px solid #9c9ca0;border-top-left-radius:3px;border-top-right-radius:3px"></div><div class="box" style="left:1663px;top:72px;width:1px;height:26px;background:#9c9ca0"></div><div class="box" style="left:1781px;top:72px;width:1px;height:26px;background:#9c9ca0"></div><div class="box" style="left:1663px;top:98px;width:256px;height:1px;background:#9c9ca0"></div><svg class="ic" style="left:1567px;top:77px" width="14" height="15" viewBox="0 0 14 15"><rect x="0.5" y="0.5" width="5" height="5" fill="#cfe4fa" stroke="#2a7ad0"/><rect x="0.5" y="9.5" width="5" height="5" fill="#cfe4fa" stroke="#2a7ad0"/><rect x="6.5" y="6.5" width="2" height="2" fill="none" stroke="#2a7ad0"/><path d="M7 2.5h6M10 7.5h3M7 12.5h6" stroke="#2a7ad0"/></svg><div class="ui" style="left:1585px;top:75px;">Outline</div><svg class="ic" style="left:1647px;top:80px" width="10" height="10" viewBox="0 0 10 10"><path d="M0.5 0.5H3L5 2.8L7 0.5H9.5V3L7.2 5L9.5 7V9.5H7L5 7.2L3 9.5H0.5V7L2.8 5L0.5 3Z" fill="#fcfcfc" stroke="#5a5a5a" stroke-width="1.05"/></svg><svg class="ic" style="left:1670px;top:77px" width="14" height="14" viewBox="0 0 14 14"><circle cx="7" cy="7" r="6.3" fill="#fff" stroke="#3aa05a" stroke-width="1.2"/><circle cx="7" cy="7" r="3.8" fill="none" stroke="#3aa05a" stroke-width="1.1"/><circle cx="7" cy="7" r="1.6" fill="#2a8a4a"/></svg><div class="ui" style="left:1688px;top:75px;">Make Target</div><svg class="ic" style="left:1876px;top:77px" width="11" height="5" viewBox="0 0 11 5"><rect x="0.5" y="0.5" width="10" height="3.5" fill="#fff" stroke="#555"/></svg><svg class="ic" style="left:1898px;top:77px" width="11" height="10" viewBox="0 0 11 10"><rect x="0.5" y="0.5" width="10" height="9" fill="#f8f8f8" stroke="#555"/><path d="M0.5 2.5h10" stroke="#555"/></svg><svg class="ic" style="left:1757px;top:105px" width="14" height="14" viewBox="0 0 14 14"><rect x="0.5" y="0.5" width="10" height="10" fill="#eef1f6" stroke="#a8b4c4"/><rect x="2.5" y="3.5" width="10" height="10" fill="#f2f5fa" stroke="#8a9ab4"/><path d="M4 9h6" stroke="#2a6ab8" stroke-width="1.3"/></svg><svg class="ic" style="left:1778px;top:104px" width="18" height="16" viewBox="0 0 18 16"><path d="M3.5 2v12M1 11l2.5 3 2.5-3" stroke="#55708a" fill="none"/><text x="5.5" y="8" font-size="10" font-weight="bold" fill="#2a8a7a" font-family="Liberation Serif">a</text><text x="10" y="15.5" font-size="10" font-weight="bold" fill="#7a2a8a" font-family="Liberation Serif">z</text></svg><svg class="ic" style="left:1803px;top:105px" width="15" height="15" viewBox="0 0 15 15"><circle cx="7.5" cy="6.5" r="5.5" fill="#6ab0f0" stroke="#4a90d8"/><circle cx="7.5" cy="6.5" r="2.5" fill="#cfe8fc"/><path d="M0.5 0.5l13.5 13.5" stroke="#10207a" stroke-width="1.2"/></svg><svg class="ic" style="left:1825px;top:105px" width="16" height="16" viewBox="0 0 16 16"><circle cx="6" cy="10" r="3.6" fill="#9aa0b0" stroke="#6a7080"/><path d="M0.5 4.5l11 11" stroke="#10207a" stroke-width="1.2"/><text x="9.5" y="7" font-size="8.5" font-weight="bold" fill="#d01830" font-family="Liberation Sans">S</text></svg><svg class="ic" style="left:1851px;top:108px" width="9" height="9" viewBox="0 0 9 9"><circle cx="4.5" cy="4.5" r="4" fill="#7ac07a" stroke="#3a9a4a" stroke-width="0.9"/></svg><svg class="ic" style="left:1872px;top:105px" width="14" height="15" viewBox="0 0 14 15"><path d="M4.5 2v12M9.5 2v12M1 5.5h12M1 10.5h12" stroke="#111" stroke-width="2.2"/><path d="M0.5 0.5l13 14" stroke="#777" stroke-width="1"/></svg><svg class="ic" style="left:1902px;top:104px" width="11" height="6" viewBox="0 0 11 6"><path d="M0.5 0.5h10l-5 5z" fill="#fff" stroke="#666"/></svg><svg class="ic" style="left:1596px;top:130px" width="11" height="11" viewBox="0 0 11 11"><rect x="0" y="0" width="5" height="5" fill="#2a6ab8"/><path d="M6 0h2v6h-8v5h11v-11h-3z" fill="#4a7ec8" opacity="0.95"/></svg><div class="ui" style="left:1620px;top:125px">xparameters.h<span style="color:#9a8050"></span></div><svg class="ic" style="left:1596px;top:156px" width="11" height="11" viewBox="0 0 11 11"><rect x="0" y="0" width="5" height="5" fill="#2a6ab8"/><path d="M6 0h2v6h-8v5h11v-11h-3z" fill="#4a7ec8" opacity="0.95"/></svg><div class="ui" style="left:1620px;top:151px">xgpio.h<span style="color:#9a8050"></span></div><svg class="ic" style="left:1596px;top:182px" width="11" height="11" viewBox="0 0 11 11"><rect x="0" y="0" width="5" height="5" fill="#2a6ab8"/><path d="M6 0h2v6h-8v5h11v-11h-3z" fill="#4a7ec8" opacity="0.95"/></svg><div class="ui" style="left:1620px;top:177px">xuartlite.h<span style="color:#9a8050"></span></div><svg class="ic" style="left:1598px;top:211px" width="7" height="7" viewBox="0 0 7 7"><circle cx="3.5" cy="3.5" r="3" fill="#5aa86a" stroke="#3a7a4a" stroke-width="0.8"/></svg><div class="ui" style="left:1620px;top:203px">val2hex(u32, u8*)<span style="color:#9a8050"> : void</span></div><div class="ui" style="left:1594px;top:230px;color:#2a5a9a;font-weight:bold;font-style:italic;font-size:17px">#</div><div class="ui" style="left:1620px;top:229px">BUFSIZE<span style="color:#9a8050"></span></div><svg class="ic" style="left:1598px;top:263px" width="7" height="7" viewBox="0 0 7 7"><circle cx="3.5" cy="3.5" r="3" fill="#5aa86a" stroke="#3a7a4a" stroke-width="0.8"/></svg><div class="ui" style="left:1620px;top:255px">main()<span style="color:#9a8050"> : int</span></div><div class="box" style="left:0px;top:875px;width:479px;height:267px;border:1px solid #9c9ca0;border-top-left-radius:3px;border-top-right-radius:3px"></div><div class="box" style="left:190px;top:876px;width:1px;height:26px;background:#9c9ca0"></div><div class="box" style="left:190px;top:902px;width:288px;height:1px;background:#9c9ca0"></div><svg class="ic" style="left:4px;top:881px" width="16" height="15" viewBox="0 0 16 15"><rect x="5.5" y="0.5" width="2" height="4" fill="#b8b8c0" stroke="#8a8a90" stroke-width="0.8"/><rect x="8.5" y="0.5" width="2" height="4" fill="#b8b8c0" stroke="#8a8a90" stroke-width="0.8"/><rect x="0" y="7" width="16" height="5" fill="#9a9aa0"/><rect x="3.5" y="3.5" width="9" height="11" fill="#2a8a4a" stroke="#1a6a3a"/><rect x="7" y="8" width="2" height="3" fill="#e8f0a0"/></svg><div class="ui" style="left:24px;top:879px;">Target Connections</div><svg class="ic" style="left:173px;top:884px" width="10" height="10" viewBox="0 0 10 10"><path d="M0.5 0.5H3L5 2.8L7 0.5H9.5V3L7.2 5L9.5 7V9.5H7L5 7.2L3 9.5H0.5V7L2.8 5L0.5 3Z" fill="#fcfcfc" stroke="#5a5a5a" stroke-width="1.05"/></svg><svg class="ic" style="left:388px;top:879px" width="16" height="14" viewBox="0 0 16 14"><path d="M0 11h15M7.5 6v8" stroke="#8a8a8a" stroke-width="1.5"/><rect x="4" y="8" width="6" height="5" fill="#3a9a4a"/><path d="M11 0.5l1.2 2.3 2.3 1.2-2.3 1.2-1.2 2.3-1.2-2.3-2.3-1.2 2.3-1.2z" fill="#ffe070" stroke="#c09020" stroke-width="0.8"/></svg><svg class="ic" style="left:410px;top:879px" width="16" height="15" viewBox="0 0 16 15"><path d="M0 11h15M7.5 4v10" stroke="#a0a0a0" stroke-width="1.5"/><circle cx="12" cy="4" r="3.3" fill="#d0d0d0" stroke="#a0a0a0"/></svg><svg class="ic" style="left:435px;top:881px" width="11" height="5" viewBox="0 0 11 5"><rect x="0.5" y="0.5" width="10" height="3.5" fill="#fff" stroke="#555"/></svg><svg class="ic" style="left:458px;top:881px" width="11" height="10" viewBox="0 0 11 10"><rect x="0.5" y="0.5" width="10" height="9" fill="#f8f8f8" stroke="#555"/><path d="M0.5 2.5h10" stroke="#555"/></svg><div class="box" style="left:23px;top:905px;width:151px;height:26px;background:linear-gradient(#f2f3f5 0,#f0f0f2 50%,#e6e6e8 50%,#e8e8ea 100%);border:1px solid #d8d8dc;border-radius:3px"></div><svg class="ic" style="left:13px;top:915px" width="6" height="10" viewBox="0 0 6 10"><path d="M0.5 0.5l5 4.5-5 4.5z" fill="none" stroke="#8a8a8a"/></svg><svg class="ic" style="left:26px;top:913px" width="16" height="12" viewBox="0 0 16 12"><path d="M0.5 10.5v-8.5h1.5l1-1.5h3.5l1 1.5h5v3.5" fill="#fbe6a8" stroke="#b8802a"/><path d="M0.5 10.5l4.5-5.5h10.5l-4.5 5.5z" fill="#f8d27a" stroke="#b8802a"/></svg><div class="ui" style="left:46px;top:907px;">Hardware Server</div><svg class="ic" style="left:13px;top:941px" width="6" height="10" viewBox="0 0 6 10"><path d="M0.5 0.5l5 4.5-5 4.5z" fill="none" stroke="#8a8a8a"/></svg><svg class="ic" style="left:26px;top:939px" width="16" height="12" viewBox="0 0 16 12"><path d="M0.5 10.5v-8.5h1.5l1-1.5h3.5l1 1.5h5v3.5" fill="#fbe6a8" stroke="#b8802a"/><path d="M0.5 10.5l4.5-5.5h10.5l-4.5 5.5z" fill="#f8d27a" stroke="#b8802a"/></svg><div class="ui" style="left:46px;top:933px;">Linux TCF Agent</div><svg class="ic" style="left:13px;top:967px" width="6" height="10" viewBox="0 0 6 10"><path d="M0.5 0.5l5 4.5-5 4.5z" fill="none" stroke="#8a8a8a"/></svg><svg class="ic" style="left:26px;top:965px" width="16" height="12" viewBox="0 0 16 12"><path d="M0.5 10.5v-8.5h1.5l1-1.5h3.5l1 1.5h5v3.5" fill="#fbe6a8" stroke="#b8802a"/><path d="M0.5 10.5l4.5-5.5h10.5l-4.5 5.5z" fill="#f8d27a" stroke="#b8802a"/></svg><div class="ui" style="left:46px;top:959px;">QEMU TcfGdbClient</div><div class="box" style="left:483px;top:875px;width:717px;height:267px;border:1px solid #9c9ca0;border-top-left-radius:3px;border-top-right-radius:3px"></div><div class="box" style="left:484px;top:902px;width:162px;height:1px;background:#9c9ca0"></div><div class="box" style="left:578px;top:876px;width:1px;height:26px;background:#9c9ca0"></div><div class="box" style="left:646px;top:876px;width:1px;height:26px;background:#9c9ca0"></div><div class="box" style="left:751px;top:876px;width:1px;height:26px;background:#9c9ca0"></div><div class="box" style="left:751px;top:902px;width:448px;height:1px;background:#9c9ca0"></div><div class="box" style="left:853px;top:876px;width:1px;height:26px;background:#9c9ca0"></div><div class="box" style="left:944px;top:876px;width:1px;height:26px;background:#9c9ca0"></div><svg class="ic" style="left:488px;top:881px" width="15" height="16" viewBox="0 0 15 16"><rect x="0.5" y="0.5" width="12" height="14" fill="#fff" stroke="#b08060"/><circle cx="6" cy="5" r="3" fill="#e03a3a"/><path d="M3 14l3-5 3 5z" fill="#f0a020"/></svg><div class="ui" style="left:507px;top:879px;">Problems</div><svg class="ic" style="left:584px;top:880px" width="16" height="16" viewBox="0 0 16 16"><rect x="2.5" y="2.5" width="12" height="13" fill="#fff" stroke="#a08050"/><rect x="5" y="0.5" width="6" height="3" fill="#c0c0c0" stroke="#808080"/><path d="M0 9l3 4 6-9" stroke="#2a6ad0" stroke-width="1.8" fill="none"/><path d="M9 9h4M9 12h4" stroke="#7a7a7a"/></svg><div class="ui" style="left:603px;top:879px;">Tasks</div><svg class="ic" style="left:651px;top:881px" width="15" height="15" viewBox="0 0 15 15"><rect x="0.5" y="0.5" width="13" height="10" fill="#cfe0f8" stroke="#1a4aa8" stroke-width="1.2"/><path d="M3 4h7M3 7h5" stroke="#1a4aa8"/><path d="M4 13h6" stroke="#1a4aa8" stroke-width="2"/></svg><div class="ui" style="left:669px;top:879px;">Console</div><svg class="ic" style="left:735px;top:884px" width="10" height="10" viewBox="0 0 10 10"><path d="M0.5 0.5H3L5 2.8L7 0.5H9.5V3L7.2 5L9.5 7V9.5H7L5 7.2L3 9.5H0.5V7L2.8 5L0.5 3Z" fill="#fcfcfc" stroke="#5a5a5a" stroke-width="1.05"/></svg><svg class="ic" style="left:758px;top:882px" width="14" height="13" viewBox="0 0 14 13"><rect x="0.5" y="0.5" width="13" height="11" fill="#f0f4fa" stroke="#4a6a9a"/><path d="M0.5 3.5h13M3.5 4v8M1 6.5h12M1 9h12" stroke="#7a9ac0"/></svg><div class="ui" style="left:776px;top:879px;">Properties</div><svg class="ic" style="left:859px;top:881px" width="15" height="15" viewBox="0 0 15 15"><rect x="5.5" y="0.5" width="9" height="8" fill="#2a5ad0" stroke="#1a2a6a"/><rect x="7" y="2" width="5" height="4" fill="#fff"/><path d="M1 14l6-6" stroke="#6a6a6a" stroke-width="2.5"/></svg><div class="ui" style="left:877px;top:879px;">Terminal</div><svg class="ic" style="left:1155px;top:881px" width="11" height="5" viewBox="0 0 11 5"><rect x="0.5" y="0.5" width="10" height="3.5" fill="#fff" stroke="#555"/></svg><svg class="ic" style="left:1178px;top:881px" width="11" height="10" viewBox="0 0 11 10"><rect x="0.5" y="0.5" width="10" height="9" fill="#f8f8f8" stroke="#555"/><path d="M0.5 2.5h10" stroke="#555"/></svg><svg class="ic" style="left:908px;top:909px" width="14" height="15" viewBox="0 0 14 15"><path d="M4.5 0.5h5v7h3.5l-6 6.5-6-6.5h3.5z" fill="#fbd870" stroke="#c08a10"/></svg><svg class="ic" style="left:931px;top:909px" width="14" height="15" viewBox="0 0 14 15"><path d="M4.5 14.5h5v-7h3.5l-6-6.5-6 6.5h3.5z" fill="#fbd870" stroke="#c08a10"/></svg><div class="box" style="left:951px;top:906px;width:23px;height:20px;border:1px solid #8a8a8a;border-radius:3px;background:linear-gradient(#e4e4e6,#d0d0d4)"></div><svg class="ic" style="left:955px;top:908px" width="16" height="16" viewBox="0 0 16 16"><path d="M5 0.5l-4 3.5 4 3.5v-2h9v-3h-9z" fill="#fbd870" stroke="#c08a10"/><path d="M11 8l4 3.5-4 3.5v-2h-9v-3h9z" fill="#fbd870" stroke="#c08a10"/></svg><div class="box" style="left:977px;top:908px;width:1px;height:17px;background:#8a8a8a"></div><svg class="ic" style="left:985px;top:909px" width="16" height="16" viewBox="0 0 16 16"><rect x="0.5" y="0.5" width="14" height="14" fill="#f4f6fa" stroke="#9aa4b8"/><rect x="9.5" y="0.5" width="5" height="14" fill="#e4e9f2" stroke="#9aa4b8"/><rect x="11" y="3" width="2" height="2" fill="#4a6a9a"/><rect x="11" y="10" width="2" height="2" fill="#4a6a9a"/><rect x="1" y="8" width="7" height="6" fill="#b0c4e0"/><rect x="2" y="10" width="4" height="3" fill="#e8e0c0"/></svg><svg class="ic" style="left:1008px;top:909px" width="16" height="16" viewBox="0 0 16 16"><rect x="0.5" y="0.5" width="14" height="14" fill="#f4f6fa" stroke="#9aa4b8"/><rect x="9.5" y="0.5" width="5" height="14" fill="#e4e9f2" stroke="#9aa4b8"/><rect x="11" y="3" width="2" height="2" fill="#4a6a9a"/><rect x="11" y="10" width="2" height="2" fill="#4a6a9a"/><path d="M2.5 9.5v-2a2 2 0 0 1 4 0v2" fill="none" stroke="#a07010"/><rect x="1.5" y="9.5" width="6" height="5" fill="#f4c850" stroke="#a07010"/></svg><svg class="ic" style="left:1032px;top:910px" width="12" height="8" viewBox="0 0 12 8"><path d="M0 1h11M0 4h8M0 7h10" stroke="#a8bce0"/></svg><svg class="ic" style="left:1055px;top:908px" width="16" height="16" viewBox="0 0 16 16"><path d="M0.5 0.5h7l3 3v11h-10z" fill="#f4f4f8" stroke="#b0a070"/><path d="M2 4h5M2 6.5h6M2 9h5" stroke="#8a9ab8"/><path d="M9 9l5 5M14 9l-5 5" stroke="#333" stroke-width="2"/><circle cx="9.5" cy="9.5" r="1.3" fill="#333"/><circle cx="13.5" cy="9.5" r="1.3" fill="#333"/><circle cx="9.5" cy="13.5" r="1.3" fill="#333"/><circle cx="13.5" cy="13.5" r="1.3" fill="#333"/></svg><div class="box" style="left:1076px;top:908px;width:1px;height:17px;background:#8a8a8a"></div><svg class="ic" style="left:1086px;top:908px" width="16" height="16" viewBox="0 0 16 16"><rect x="0.5" y="5.5" width="12" height="10" fill="#f4f6fa" stroke="#8a8a8a"/><rect x="1" y="6" width="11" height="2" fill="#5a8ae0"/><path d="M7 10l6-6" stroke="#3a9a3a" stroke-width="2"/><circle cx="13" cy="3" r="2.5" fill="#3a9a3a"/></svg><svg class="ic" style="left:1110px;top:908px" width="15" height="14" viewBox="0 0 15 14"><rect x="0.5" y="0.5" width="13" height="10" fill="#cfe0f8" stroke="#1a4aa8" stroke-width="1.2"/><path d="M3 4h7M3 7h5" stroke="#1a4aa8"/><path d="M4 13h6" stroke="#1a4aa8" stroke-width="2"/></svg><svg class="ic" style="left:1134px;top:914px" width="9" height="5" viewBox="0 0 9 5"><path d="M0 0h9l-4.5 5z" fill="#000"/></svg><svg class="ic" style="left:1156px;top:908px" width="16" height="16" viewBox="0 0 16 16"><rect x="0.5" y="3.5" width="13" height="11" fill="#fff" stroke="#a08050"/><rect x="1" y="4" width="7" height="2" fill="#5a8ae0"/><path d="M11 0.5l1.2 2.3 2.3 1.2-2.3 1.2-1.2 2.3-1.2-2.3-2.3-1.2 2.3-1.2z" fill="#ffe070" stroke="#c09020" stroke-width="0.8"/></svg><svg class="ic" style="left:1181px;top:914px" width="9" height="5" viewBox="0 0 9 5"><path d="M0 0h9l-4.5 5z" fill="#000"/></svg><div class="ui" style="left:486px;top:928px;">CDT Build Console [peripherals_test]</div><div class="box" style="left:486px;top:950px;width:711px;height:1px;background:#a8a8ac"></div><div class="box" style="left:484px;top:951px;width:692px;height:168px;overflow:hidden"><div class="mono" style="left:4px;top:-10px;color:#000">mb-size peripherals_test.elf  |tee "peripherals_test.elf.size"</div><div class="mono" style="left:4px;top:10px;color:#000">   text    data     bss     dec     hex filename</div><div class="mono" style="left:4px;top:30px;color:#000">   7272     336    2096    9704    25e8 peripherals_test.elf</div><div class="mono" style="left:4px;top:50px;color:#000">Finished building: peripherals_test.elf.size</div><div class="mono" style="left:4px;top:110px;color:#2a2ae8">15:26:47 Build Finished (took 1s.123ms)</div></div><div class="box" style="left:1177px;top:953px;width:19px;height:164px;background:linear-gradient(90deg,#ebebeb 0,#ebebeb 7px,#f9f9f9 7px,#f9f9f9 8px,#eeeeee 8px,#eeeeee 9px,#f6f7f8 9px,#f6f7f8 18px,#ececec 18px)"></div><svg class="ic" style="left:1182px;top:959px" width="9" height="5" viewBox="0 0 9 5"><path d="M4.5 0l4.5 5h-9z" fill="#444"/></svg><svg class="ic" style="left:1182px;top:1105px" width="9" height="5" viewBox="0 0 9 5"><path d="M0 0h9l-4.5 5z" fill="#333"/></svg><div class="box" style="left:1177px;top:1051px;width:19px;height:44px;border:1px solid #8e8e8e;border-radius:2px;background:linear-gradient(90deg,#fbfbfb 0,#f4f4f4 6px,#dedede 7px,#d8d8da 13px,#d0d2da 15px,#c8c8cc 17px)"></div><div class="box" style="left:1182px;top:1068px;width:9px;height:1px;background:#333"></div><div class="box" style="left:1182px;top:1072px;width:9px;height:1px;background:#333"></div><div class="box" style="left:1182px;top:1076px;width:9px;height:1px;background:#333"></div><div class="box" style="left:487px;top:1119px;width:688px;height:19px;background:#ececec"></div><svg class="ic" style="left:492px;top:1124px" width="5" height="9" viewBox="0 0 5 9"><path d="M5 0v9l-5-4.5z" fill="#555"/></svg><svg class="ic" style="left:1162px;top:1124px" width="5" height="9" viewBox="0 0 5 9"><path d="M0 0v9l5-4.5z" fill="#555"/></svg><div class="box" style="left:508px;top:1119px;width:165px;height:19px;border:1px solid #8e8e8e;border-radius:2px;background:linear-gradient(#f0f0f0,#dcdcdc 50%,#d0d0d4)"></div><div class="box" style="left:585px;top:1123px;width:1px;height:9px;background:#333"></div><div class="box" style="left:589px;top:1123px;width:1px;height:9px;background:#333"></div><div class="box" style="left:593px;top:1123px;width:1px;height:9px;background:#333"></div><div class="box" style="left:1204px;top:875px;width:716px;height:267px;border:1px solid #9c9ca0;border-top-left-radius:3px;border-top-right-radius:3px"></div><div class="box" style="left:1315px;top:876px;width:1px;height:26px;background:#9c9ca0"></div><div class="box" style="left:1315px;top:902px;width:604px;height:1px;background:#9c9ca0"></div><svg class="ic" style="left:1209px;top:881px" width="14" height="16" viewBox="0 0 14 16"><rect x="0.5" y="0.5" width="13" height="15" fill="#fff" stroke="#1a4aa8" stroke-width="1.2"/><path d="M3 4h2M3 7h2M3 10h2M3 13h2" stroke="#e03030"/><path d="M6 4h5M6 7h5M6 10h5M6 13h5" stroke="#8a9ab8"/></svg><div class="ui" style="left:1228px;top:879px;">SDK Log</div><svg class="ic" style="left:1299px;top:884px" width="10" height="10" viewBox="0 0 10 10"><path d="M0.5 0.5H3L5 2.8L7 0.5H9.5V3L7.2 5L9.5 7V9.5H7L5 7.2L3 9.5H0.5V7L2.8 5L0.5 3Z" fill="#fcfcfc" stroke="#5a5a5a" stroke-width="1.05"/></svg><svg class="ic" style="left:1828px;top:879px" width="16" height="16" viewBox="0 0 16 16"><rect x="0.5" y="0.5" width="12" height="14" fill="#fff" stroke="#1a4aa8"/><path d="M2 4h2M2 7h2M2 10h2" stroke="#e03030"/><path d="M5 4h5M5 7h5M5 10h5" stroke="#8a9ab8"/><circle cx="12" cy="12" r="3.5" fill="#e03030"/><path d="M10 12h4" stroke="#fff"/></svg><svg class="ic" style="left:1851px;top:879px" width="16" height="16" viewBox="0 0 16 16"><rect x="0.5" y="0.5" width="12" height="14" fill="#fff" stroke="#1a4aa8"/><path d="M2 4h2M2 7h2M2 10h2" stroke="#e03030"/><path d="M5 4h5M5 7h5M5 10h5" stroke="#8a9ab8"/><circle cx="12" cy="12" r="3.5" fill="#555"/></svg><svg class="ic" style="left:1876px;top:881px" width="11" height="5" viewBox="0 0 11 5"><rect x="0.5" y="0.5" width="10" height="3.5" fill="#fff" stroke="#555"/></svg><svg class="ic" style="left:1899px;top:881px" width="11" height="10" viewBox="0 0 11 10"><rect x="0.5" y="0.5" width="10" height="9" fill="#f8f8f8" stroke="#555"/><path d="M0.5 2.5h10" stroke="#555"/></svg><div class="box" style="left:1206px;top:905px;width:686px;height:205px;overflow:hidden"><div class="mono" style="left:8px;top:7px;color:#3a3ac4">14:51:14 INFO   : Launching XSDB server: xsdb.bat -s C:/apl/Xilinx/SDK/2015.4/bin</div><div class="mono" style="left:8px;top:27px;color:#3a3ac4">14:51:15 INFO   : XSDB server has started successfully.</div><div class="mono" style="left:8px;top:47px;color:#3a3ac4">14:51:15 INFO   : Processing command line option -hwspec C:/Users/izumi/Documents</div><div class="mono" style="left:8px;top:67px;color:#3a3ac4">14:51:16 INFO   : Checking for hwspec changes in the project Nexys4_top_hw_platform</div><div class="mono" style="left:8px;top:87px;color:#3a3ac4">15:09:52 INFO   : Inferring section assignments and sizes from elf file: C:\Users</div><div class="mono" style="left:8px;top:107px;color:#3a3ac4">15:10:41 INFO   : Successfully generated C:\Users\izumi\Documents\Work\Rits\Nexys</div><div class="mono" style="left:8px;top:127px;color:#3a3ac4">15:10:41 INFO   : Applying linker script to all configurations of project peripherals</div><div class="mono" style="left:8px;top:147px;color:#3a3ac4">15:10:41 INFO   : Setting rebuild state to true for all configurations of project</div></div><div class="box" style="left:1893px;top:910px;width:19px;height:200px;background:linear-gradient(90deg,#ebebeb 0,#ebebeb 7px,#f9f9f9 7px,#f9f9f9 8px,#eeeeee 8px,#eeeeee 9px,#f6f7f8 9px,#f6f7f8 18px,#ececec 18px)"></div><svg class="ic" style="left:1898px;top:918px" width="9" height="5" viewBox="0 0 9 5"><path d="M4.5 0l4.5 5h-9z" fill="#666"/></svg><svg class="ic" style="left:1898px;top:1099px" width="9" height="5" viewBox="0 0 9 5"><path d="M0 0h9l-4.5 5z" fill="#666"/></svg><div class="box" style="left:1212px;top:1114px;width:680px;height:19px;background:#ececec"></div><svg class="ic" style="left:1218px;top:1119px" width="5" height="9" viewBox="0 0 5 9"><path d="M5 0v9l-5-4.5z" fill="#555"/></svg><svg class="ic" style="left:1878px;top:1119px" width="5" height="9" viewBox="0 0 5 9"><path d="M0 0v9l5-4.5z" fill="#555"/></svg><div class="box" style="left:1234px;top:1114px;width:227px;height:19px;border:1px solid #8e8e8e;border-radius:2px;background:linear-gradient(#f0f0f0,#dcdcdc 50%,#d0d0d4)"></div><div class="box" style="left:1343px;top:1118px;width:1px;height:9px;background:#333"></div><div class="box" style="left:1347px;top:1118px;width:1px;height:9px;background:#333"></div><div class="box" style="left:1351px;top:1118px;width:1px;height:9px;background:#333"></div><svg class="ic" style="left:6px;top:1146px" width="13" height="15" viewBox="0 0 13 15"><path d="M0.5 0.5h8l4 4v10h-12z" fill="#f4f6fb" stroke="#a08040"/><path d="M8.5 0.5v4h4" fill="#f3d79b" stroke="#c89a50"/><text x="2" y="12.5" font-family="Liberation Sans" font-weight="bold" font-size="9" fill="#2b5ea8">.c</text></svg><div class="ui" style="left:24px;top:1143px;letter-spacing:0.7px">/peripherals_test/src/peripherals_test.c</div><svg class="ic" style="left:226px;top:505px" width="166" height="160"><ellipse cx="83.0" cy="80.0" rx="74.25" ry="71.25" fill="none" stroke="#ed1c24" stroke-width="7.5"/></svg><div style="position:absolute;left:272.0px;top:519.5px;font-family:'Liberation Sans',sans-serif;font-size:118px;line-height:118px;color:#ed1c24;transform-origin:1.03px 0;transform:scaleX(0.961)">A</div><svg class="ic" style="left:897px;top:230px" width="161" height="155"><ellipse cx="80.5" cy="77.5" rx="71.75" ry="68.75" fill="none" stroke="#ed1c24" stroke-width="7.5"/></svg><div style="position:absolute;left:941.3px;top:245.5px;font-family:'Liberation Sans',sans-serif;font-size:118px;line-height:118px;color:#ed1c24;transform-origin:10.3px 0;transform:scaleX(0.982)">B</div><svg class="ic" style="left:1646px;top:321px" width="169" height="163"><ellipse cx="84.5" cy="81.5" rx="75.75" ry="72.75" fill="none" stroke="#ed1c24" stroke-width="7.5"/></svg><div style="position:absolute;left:1686.3px;top:346.1px;font-family:'Liberation Sans',sans-serif;font-size:118px;line-height:118px;color:#ed1c24;transform-origin:6.2px 0;transform:scaleX(0.920)">C</div><svg class="ic" style="left:242px;top:944px" width="155" height="152"><ellipse cx="77.5" cy="76.0" rx="68.75" ry="67.25" fill="none" stroke="#ed1c24" stroke-width="7.5"/></svg><div style="position:absolute;left:283.3px;top:962.5px;font-family:'Liberation Sans',sans-serif;font-size:118px;line-height:118px;color:#ed1c24;transform-origin:10.3px 0;transform:scaleX(0.924)">D</div><svg class="ic" style="left:895px;top:969px" width="158" height="158"><ellipse cx="79.0" cy="79.0" rx="70.25" ry="70.25" fill="none" stroke="#ed1c24" stroke-width="7.5"/></svg><div style="position:absolute;left:937.2px;top:993.2px;font-family:'Liberation Sans',sans-serif;font-size:118px;line-height:118px;color:#ed1c24;transform-origin:10.3px 0;transform:scaleX(0.865)">E</div><svg class="ic" style="left:1395px;top:936px" width="167" height="156"><ellipse cx="83.5" cy="78.0" rx="74.75" ry="69.25" fill="none" stroke="#ed1c24" stroke-width="7.5"/></svg><div style="position:absolute;left:1446.4px;top:954.5px;font-family:'Liberation Sans',sans-serif;font-size:118px;line-height:118px;color:#ed1c24;transform-origin:10.3px 0;transform:scaleX(0.948)">F</div></body></html>
